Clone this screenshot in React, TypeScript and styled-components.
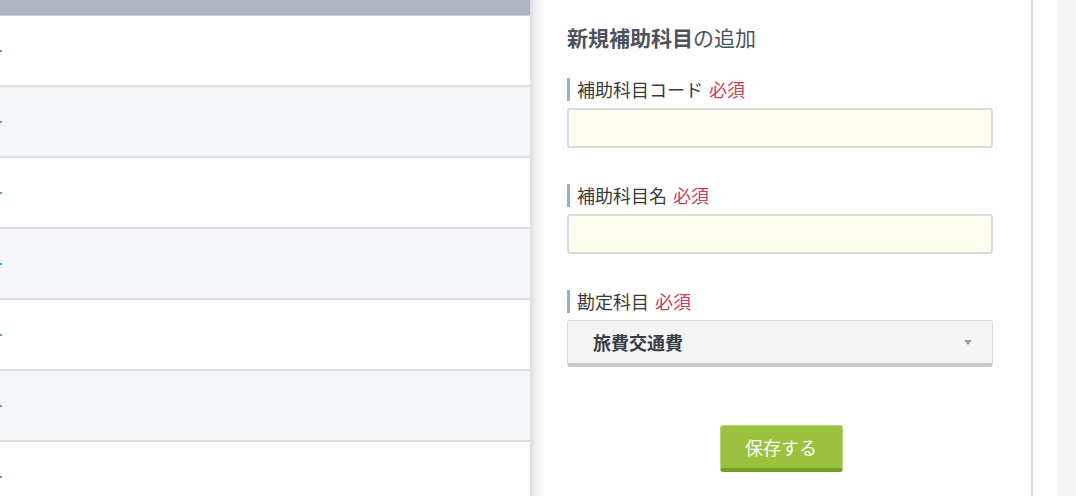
import React from "react";
import styled, { createGlobalStyle } from "styled-components";

const Global = createGlobalStyle`
  html, body { margin: 0; padding: 0; background: #fff; }
  body {
    font-family: "Noto Sans CJK JP", "Noto Sans", "Liberation Sans", sans-serif;
    overflow: hidden;
  }
  * { box-sizing: border-box; }
`;

const Page = styled.div`
  display: flex;
  width: 1076px;
  height: 496px;
  overflow: hidden;
`;

const Table = styled.div`
  width: 530px;
  flex: none;
  display: flex;
  flex-direction: column;
`;

const HeaderBar = styled.div`
  height: 16px;
  flex: none;
  background: #aeb4c1;
  border-bottom: 1px solid #cdd2da;
`;

const Row = styled.div<{ $alt: boolean }>`
  height: 71px;
  flex: none;
  display: flex;
  align-items: center;
  background: ${(p) => (p.$alt ? "#f5f6f8" : "#ffffff")};
  border-bottom: 2px solid #dcdfe3;
`;

const LinkStub = styled.span`
  width: 2px;
  height: 2px;
  background: #45a6d9;
`;

const Panel = styled.div`
  width: 503px;
  flex: none;
  padding: 24px 39px 0 37px;
  background: linear-gradient(to right, #dcdcdc 0, #f2f2f2 6px, #ffffff 16px);
  border-right: 2px solid #dcdcdc;
  display: flex;
  flex-direction: column;
`;

const Heading = styled.h2`
  margin: 0 0 28px;
  font-size: 21px;
  line-height: 26px;
  font-weight: 400;
  color: #4b535d;
`;

const Strong = styled.span`
  font-weight: 700;
`;

const Field = styled.div`
  display: flex;
  flex-direction: column;
  margin-bottom: 36px;
`;

const Label = styled.div`
  height: 23px;
  line-height: 23px;
  border-left: 3px solid #97b0bf;
  padding-left: 7px;
  margin-bottom: 7px;
  font-size: 18px;
  color: #3a3a3a;
`;

const Required = styled.span`
  color: #c8405a;
  margin-left: 6px;
`;

const TextInput = styled.input`
  width: 426px;
  height: 40px;
  border: 2px solid #d9dddf;
  border-radius: 3px;
  background: #fdfdf0;
  outline: none;
  font: inherit;
`;

const Select = styled.div`
  width: 426px;
  height: 47px;
  border: 1px solid #d9dcde;
  border-bottom: 4px solid #c9c9c9;
  border-radius: 3px;
  background: #f4f4f4;
  display: flex;
  align-items: center;
  justify-content: space-between;
  padding: 0 20px 0 25px;
  font-size: 18px;
  font-weight: 700;
  color: #3a3f45;
`;

const Caret = styled.svg`
  width: 8px;
  height: 5px;
`;

const ButtonRow = styled.div`
  display: flex;
  justify-content: center;
  margin-top: 22px;
  padding-left: 3px;
`;

const SaveButton = styled.button`
  width: 123px;
  height: 47px;
  border: 1px solid #b7d77a;
  border-bottom: 4px solid #6fa222;
  border-radius: 3px;
  background: #9bc13f;
  color: #fff;
  font: inherit;
  font-size: 18px;
  padding: 0;
`;

const Gap = styled.div`
  width: 24px;
  flex: none;
  background: #fff;
`;

const Strip = styled.div`
  flex: 1;
  background: #f5f5f5;
`;

export default function App() {
  const rows = [0, 1, 2, 3, 4, 5, 6];
  return (
    <>
      <Global />
      <Page>
        <Table>
          <HeaderBar />
          {rows.map((i) => (
            <Row key={i} $alt={i % 2 === 1}>
              <LinkStub />
            </Row>
          ))}
        </Table>
        <Panel>
          <Heading>
            <Strong>新規補助科目</Strong>の追加
          </Heading>
          <Field>
            <Label>
              補助科目コード<Required>必須</Required>
            </Label>
            <TextInput />
          </Field>
          <Field>
            <Label>
              補助科目名<Required>必須</Required>
            </Label>
            <TextInput />
          </Field>
          <Field>
            <Label>
              勘定科目<Required>必須</Required>
            </Label>
            <Select>
              <span>旅費交通費</span>
              <Caret viewBox="0 0 8 5">
                <path d="M0 0 L8 0 L4 5 Z" fill="#8ba4b5" />
              </Caret>
            </Select>
          </Field>
          <ButtonRow>
            <SaveButton>保存する</SaveButton>
          </ButtonRow>
        </Panel>
        <Gap />
        <Strip />
      </Page>
    </>
  );
}
